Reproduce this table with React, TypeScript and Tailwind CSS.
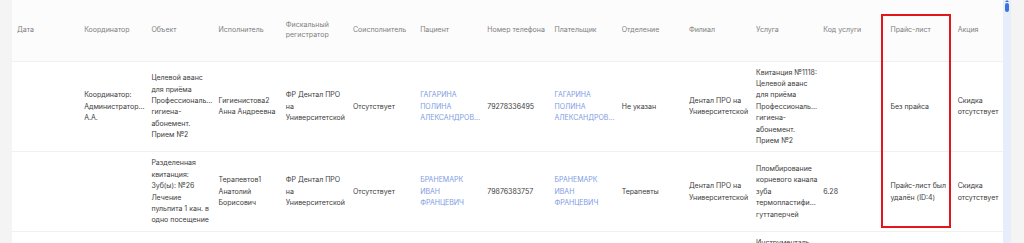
import React from "react";

type Cell = { lines: string[]; link?: boolean };

const headers: string[][] = [
  ["Дата"],
  ["Координатор"],
  ["Объект"],
  ["Исполнитель"],
  ["Фискальный", "регистратор"],
  ["Соисполнитель"],
  ["Пациент"],
  ["Номер телефона"],
  ["Плательщик"],
  ["Отделение"],
  ["Филиал"],
  ["Услуга"],
  ["Код услуги"],
  ["Прайс-лист"],
  ["Акция"],
];

const e: Cell = { lines: [] };

const rows: Cell[][] = [
  [
    e,
    { lines: ["Координатор:", "Администратор...", "А.А."] },
    { lines: ["Целевой аванс", "для приёма", "Профессиональ...", "гигиена-", "абонемент.", "Прием №2"] },
    { lines: ["Гигиенистова2", "Анна Андреевна"] },
    { lines: ["ФР Дентал ПРО", "на", "Университетской"] },
    { lines: ["Отсутствует"] },
    { lines: ["ГАГАРИНА", "ПОЛИНА", "АЛЕКСАНДРОВ..."], link: true },
    { lines: ["79278336495"] },
    { lines: ["ГАГАРИНА", "ПОЛИНА", "АЛЕКСАНДРОВ..."], link: true },
    { lines: ["Не указан"] },
    { lines: ["Дентал ПРО на", "Университетской"] },
    { lines: ["Квитанция №1118:", "Целевой аванс", "для приёма", "Профессиональ...", "гигиена-", "абонемент.", "Прием №2"] },
    e,
    { lines: ["Без прайса"] },
    { lines: ["Скидка", "отсутствует"] },
  ],
  [
    e,
    e,
    { lines: ["Разделенная", "квитанция:", "Зуб(ы): №26", "Лечение", "пульпита 1 кан. в", "одно посещение"] },
    { lines: ["Терапевтов1", "Анатолий", "Борисович"] },
    { lines: ["ФР Дентал ПРО", "на", "Университетской"] },
    { lines: ["Отсутствует"] },
    { lines: ["БРАНЕМАРК", "ИВАН", "ФРАНЦЕВИЧ"], link: true },
    { lines: ["79876383757"] },
    { lines: ["БРАНЕМАРК", "ИВАН", "ФРАНЦЕВИЧ"], link: true },
    { lines: ["Терапевты"] },
    { lines: ["Дентал ПРО на", "Университетской"] },
    { lines: ["Пломбирование", "корневого канала", "зуба", "термопластифи...", "гуттаперчей"] },
    { lines: ["6.28"] },
    { lines: ["Прайс-лист был", "удалён (ID:4)"] },
    { lines: ["Скидка", "отсутствует"] },
  ],
  [e, e, e, e, e, e, e, e, e, e, e, { lines: ["Инструменталь..."] }, e, e, e],
];

export default function App() {
  return (
    <div
      className="flex h-[243px] w-[1024px] overflow-hidden bg-[#f4f4f4]"
      style={{ fontFamily: "Inter, 'Noto Sans', sans-serif" }}
    >
      <div className="w-[12px] shrink-0 bg-[#f4f4f4]" />
      <div className="relative w-[991px] shrink-0 overflow-hidden bg-white">
        <table className="table-fixed border-collapse w-[1008px]">
          <colgroup>
            {headers.map((_, i) => (
              <col key={i} className="w-[67.2px]" />
            ))}
          </colgroup>
          <thead>
            <tr className="bg-[#fcfcfc] border-b border-[#f0f0f0]">
              {headers.map((h, i) => (
                <th
                  key={i}
                  className="h-[61px] px-[5px] text-left align-middle font-normal text-[7px] leading-[10.4px] text-[#808080]"
                >
                  {h.map((l, j) => (
                    <div key={j} className="whitespace-nowrap">
                      {l}
                    </div>
                  ))}
                </th>
              ))}
            </tr>
          </thead>
          <tbody>
            {rows.map((r, ri) => (
              <tr key={ri} className="border-b border-[#f0f0f0]">
                {r.map((c, ci) => (
                  <td
                    key={ci}
                    className={
                      "px-[5px] py-[5px] align-middle text-[7px] leading-[11.4px] " +
                      (c.link ? "text-[#7d9be3]" : "text-[#3c3c3c]")
                    }
                  >
                    {c.lines.map((l, j) => (
                      <div key={j} className="whitespace-nowrap">
                        {l}
                      </div>
                    ))}
                  </td>
                ))}
              </tr>
            ))}
          </tbody>
        </table>
        <div className="pointer-events-none absolute left-[869px] top-[14px] h-[214px] w-[70px] border-2 border-[#e3161b]" />
      </div>
      <div className="relative w-[8px] shrink-0 bg-[#e7eefb]">
        <div className="absolute left-[2px] top-[0px] h-0 w-0 border-x-[2px] border-b-[2px] border-x-transparent border-b-[#3b73d8]" />
        <div className="absolute left-[2px] top-[3px] h-[9px] w-[4px] rounded-full bg-[#3b73d8]" />
      </div>
      <div className="flex-1 bg-[#f4f4f4]" />
    </div>
  );
}
